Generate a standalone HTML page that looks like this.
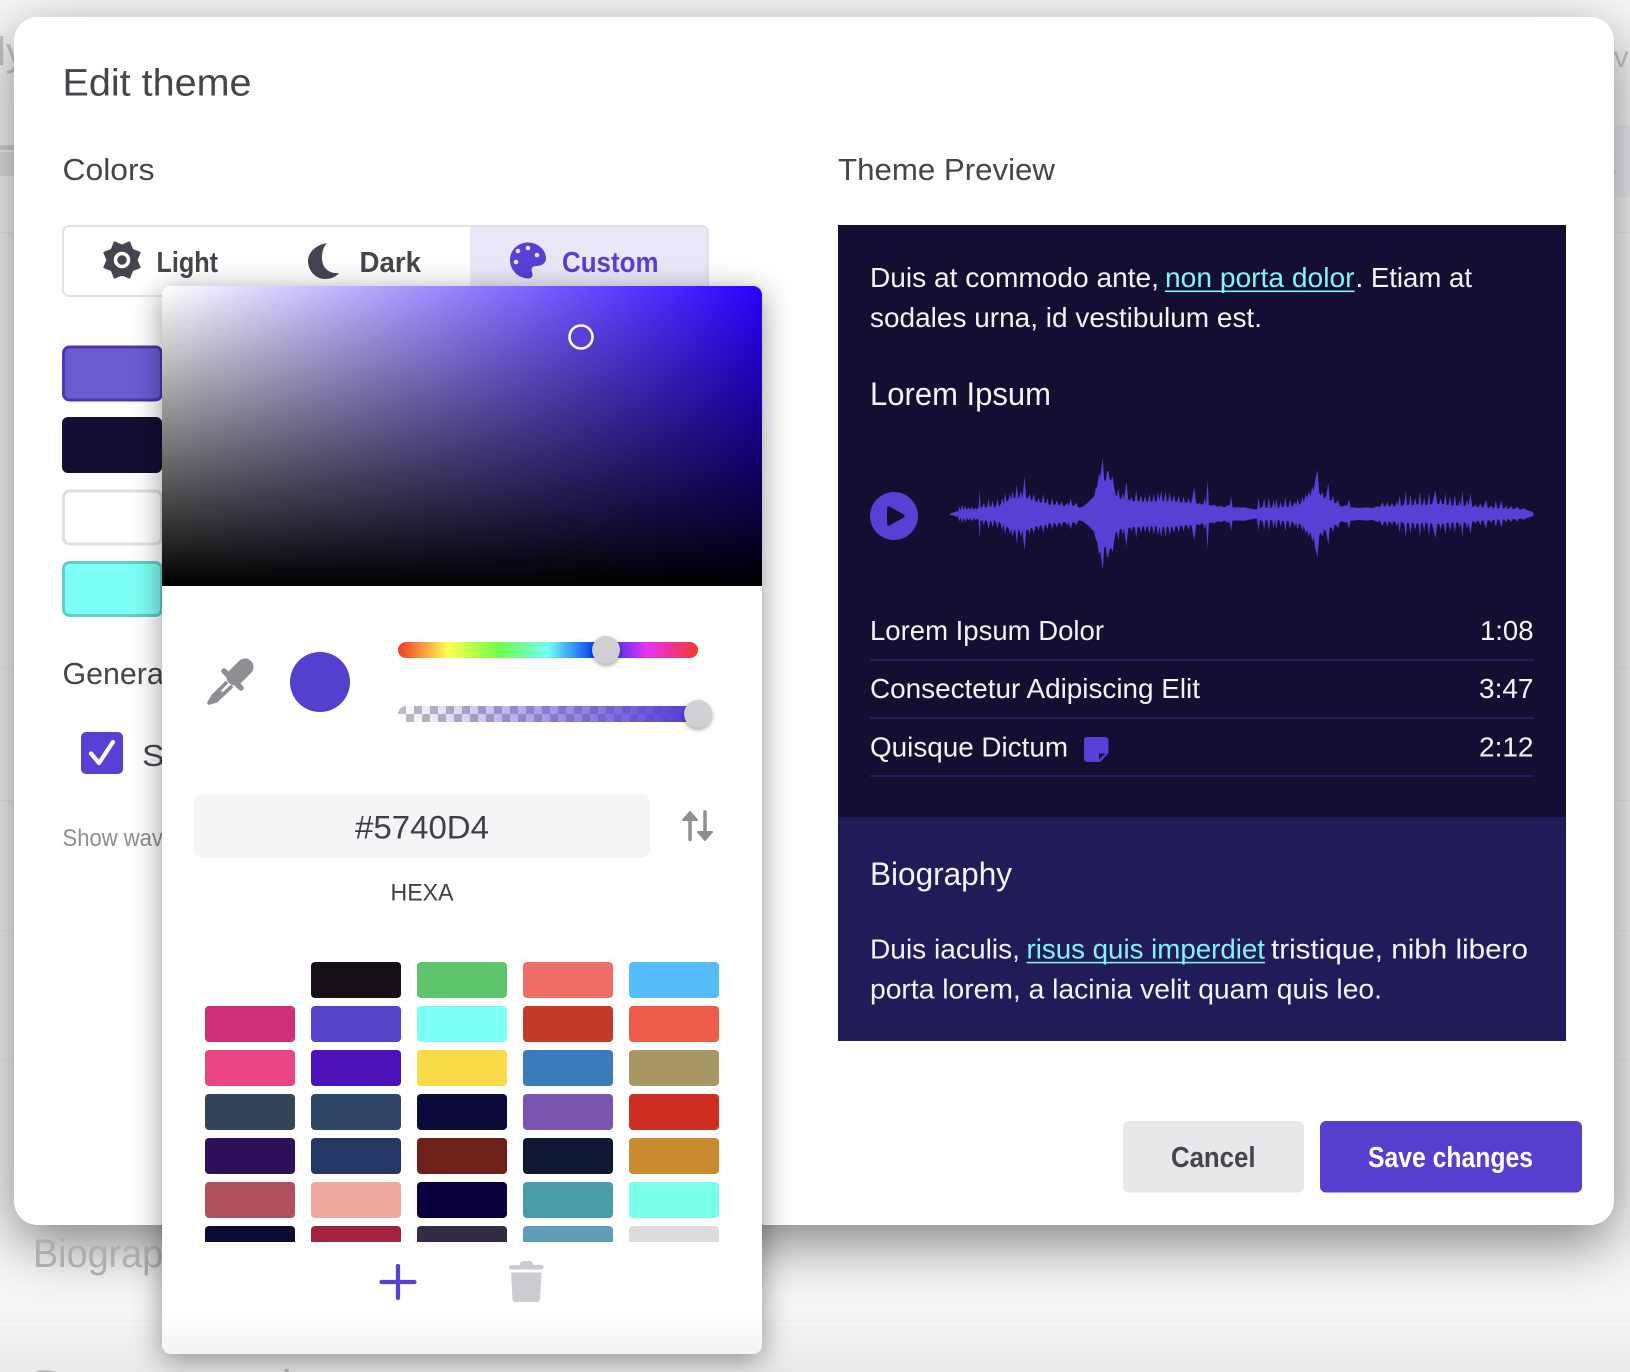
<!DOCTYPE html>
<html><head><meta charset="utf-8"><title>Edit theme</title>
<style>
html,body{margin:0;padding:0;width:1630px;height:1372px;overflow:hidden;background:#f7f7f7}
*{box-sizing:border-box}
.a{position:absolute}
svg{position:absolute;left:0;top:0;overflow:visible}
text{font-family:"Liberation Sans",sans-serif}
#modal{left:14px;top:17px;width:1600px;height:1208px;background:#fff;border-radius:24px;box-shadow:0 18px 58px rgba(0,0,0,.48)}
#pop{left:162px;top:286px;width:600px;height:1068px;background:linear-gradient(to bottom,#fff 0,#fff 1025px,#f4f4f4 1068px);border-radius:9px;box-shadow:0 6px 30px rgba(0,0,0,.42)}
#sat{left:0;top:0;width:600px;height:300px;border-radius:9px 9px 0 0;background:linear-gradient(to top,#000,rgba(0,0,0,0)),linear-gradient(to right,#fff,#2b00ff)}
#hue{left:236px;top:356px;width:300px;height:16px;border-radius:8px;background:linear-gradient(to right,#f03a2a 0,#ffff50 16.6%,#70ff45 33.3%,#70fff5 50%,#0030f0 66.6%,#ea33f0 83.3%,#f03a2a 100%)}
#alpha{left:236px;top:420px;width:300px;height:16px;border-radius:8px 0 0 8px;background:linear-gradient(to right,rgba(87,64,212,0),#5740d4 96%),repeating-conic-gradient(#bdbdbd 0 25%,#fff 0 50%) 8px 0/16px 16px}
.th{width:28px;height:28px;border-radius:50%;background:#cfcfd4;box-shadow:0 2px 5px rgba(0,0,0,.35)}
#inp{left:32px;top:508px;width:456px;height:64px;border-radius:8px;background:#f5f5f8}
#clip{left:43px;top:676px;width:514px;height:280px;overflow:hidden}
#clip div{position:absolute;width:90px;height:36px;border-radius:4px}
</style></head>
<body>

<svg width="1630" height="1372">
  <defs><linearGradient id="bot" x1="0" y1="0" x2="0" y2="1"><stop offset="0" stop-color="#f7f7f7"/><stop offset="1" stop-color="#e9e9e9"/></linearGradient></defs>
  <rect x="0" y="1310" width="1630" height="62" fill="url(#bot)"/>
  <rect x="0" y="145" width="20" height="5" fill="#d6d6d6"/>
  <rect x="0" y="152" width="20" height="24" fill="#e4e4e4"/>
  <rect x="1600" y="125" width="30" height="72" fill="#eeeef3"/>
  <g fill="#eeeeee">
    <rect x="0" y="232" width="1630" height="1"/>
    <rect x="0" y="668" width="1630" height="1"/>
    <rect x="0" y="800" width="1630" height="1"/>
    <rect x="0" y="930" width="1630" height="1"/>
    <rect x="0" y="1059" width="1630" height="1"/>
    <rect x="0" y="1320" width="1630" height="1"/>
  </g>
  <text x="-3" y="65" font-size="40" fill="#c6c6c6">ly</text>
  <text x="1597" y="67" font-size="30" fill="#c4c4ca">av</text>
  <text x="1608" y="172" font-size="26" fill="#c4c4d2">t</text>
</svg>

<div id="modal" class="a"></div>

<svg width="1630" height="1372">
  <text x="33" y="1267" font-size="40" fill="#adadad" textLength="170" lengthAdjust="spacingAndGlyphs">Biography</text>
  <text x="33" y="1398" font-size="40" fill="#b4b4b4" textLength="310" lengthAdjust="spacingAndGlyphs">Documentation</text>
</svg>
<div class="a" style="left:14px;top:17px;width:1600px;height:1208px;background:#fff;border-radius:24px"></div>

<svg width="1630" height="1372">
  <g fill="#45454f">
    <text x="62.5" y="95.5" font-size="38" textLength="189" lengthAdjust="spacingAndGlyphs">Edit theme</text>
    <text x="62.5" y="180" font-size="31" textLength="92" lengthAdjust="spacingAndGlyphs">Colors</text>
    <text x="838" y="180" font-size="31" textLength="217" lengthAdjust="spacingAndGlyphs">Theme Preview</text>
    <text x="62.5" y="684" font-size="31" textLength="108" lengthAdjust="spacingAndGlyphs">General</text>
    <text x="142" y="766" font-size="31" textLength="240" lengthAdjust="spacingAndGlyphs">Show waveform</text>
  </g>
  <text x="62.5" y="846" font-size="24" fill="#8d8d95" textLength="262" lengthAdjust="spacingAndGlyphs">Show waveform in preview</text>

  <!-- segmented -->
  <rect x="63" y="226" width="645" height="70" rx="6" fill="#fff" stroke="#e2e2e2" stroke-width="2"/>
  <path d="M470 227H702a5 5 0 0 1 5 5V295H470Z" fill="#eae8f8"/>
  <path transform="translate(122,260)" fill-rule="evenodd" fill="#45454f" stroke="#45454f" stroke-width="2" stroke-linejoin="round" d="M7.3-17.6 10.25-10.25 17.6-7.3 14.5 0 17.6 7.3 10.25 10.25 7.3 17.6 0 14.5-7.3 17.6-10.25 10.25-17.6 7.3-14.5 0-17.6-7.3-10.25-10.25-7.3-17.6 0-14.5Z"/>
  <circle cx="122" cy="260" r="6.5" fill="#45454f" stroke="#fff" stroke-width="3.5"/>
  <text x="156.5" y="272" font-size="29" fill="#45454f" font-weight="bold" textLength="61.500" lengthAdjust="spacingAndGlyphs">Light</text>
  <path fill="#45454f" d="M327 243C316 245 308 252 308 261C308 271 316 279 325 279C331 279 336 277 339 273C329 274 322 268 322 258C322 251 324 246 327 243Z"/>
  <text x="359.5" y="272" font-size="29" fill="#45454f" font-weight="bold" textLength="61.500" lengthAdjust="spacingAndGlyphs">Dark</text>
  <path fill="#5740d4" d="M528 242.5C538 242.5 546 250 546 258C546 264 541 266 536 266C532 266 531 269 532 272C533 275 533 278 529 278.5C518 278.5 510 270 510 260C510 250 518 242.5 528 242.5Z"/>
  <g fill="#eae8f8"><circle cx="518" cy="251" r="2.3"/><circle cx="528" cy="248" r="2.3"/><circle cx="537" cy="255" r="2.3"/><circle cx="516" cy="262" r="2.3"/></g>
  <text x="562" y="272" font-size="29" fill="#5740d4" font-weight="bold" textLength="96.5" lengthAdjust="spacingAndGlyphs">Custom</text>

  <!-- colour swatches -->
  <rect x="63.5" y="347" width="98" height="53" rx="6" fill="#6c5cd3" stroke="#4a38ad" stroke-width="3"/>
  <rect x="62" y="417" width="100" height="56" rx="6" fill="#150e33"/>
  <rect x="63.5" y="491" width="98" height="53" rx="6" fill="#fff" stroke="#e0e0e0" stroke-width="3"/>
  <rect x="63.5" y="562.5" width="98" height="53" rx="6" fill="#7efff5" stroke="#5fd0c8" stroke-width="3"/>

  <!-- checkbox -->
  <rect x="81" y="732" width="42" height="42" rx="5" fill="#5740d4"/>
  <path d="M91 753.5 99 763 113 742" fill="none" stroke="#fff" stroke-width="4.2" stroke-linecap="round" stroke-linejoin="round"/>

  <!-- preview -->
  <rect x="838" y="225" width="728" height="592" fill="#150e33"/>
  <rect x="838" y="817" width="728" height="224" fill="#221b59"/>
  <g fill="#f4f4f8" font-size="28">
    <text x="870" y="287" textLength="289" lengthAdjust="spacingAndGlyphs">Duis at commodo ante,</text>
    <text x="1355.5" y="287" textLength="116.5" lengthAdjust="spacingAndGlyphs">. Etiam at</text>
    <text x="870" y="327" textLength="392" lengthAdjust="spacingAndGlyphs">sodales urna, id vestibulum est.</text>
    <text x="870" y="640" textLength="234" lengthAdjust="spacingAndGlyphs">Lorem Ipsum Dolor</text>
    <text x="870" y="698" textLength="330" lengthAdjust="spacingAndGlyphs">Consectetur Adipiscing Elit</text>
    <text x="870" y="756.5" textLength="198" lengthAdjust="spacingAndGlyphs">Quisque Dictum</text>
    <text x="1480" y="640" textLength="53.5" lengthAdjust="spacingAndGlyphs">1:08</text>
    <text x="1479" y="698" textLength="54.5" lengthAdjust="spacingAndGlyphs">3:47</text>
    <text x="1479" y="756.5" textLength="54.5" lengthAdjust="spacingAndGlyphs">2:12</text>
    <text x="870" y="958.5" textLength="150" lengthAdjust="spacingAndGlyphs">Duis iaculis,</text>
    <text x="1271" y="958.5" textLength="257" lengthAdjust="spacingAndGlyphs">tristique, nibh libero</text>
    <text x="870" y="998.5" textLength="512" lengthAdjust="spacingAndGlyphs">porta lorem, a lacinia velit quam quis leo.</text>
  </g>
  <g fill="#f4f4f8" font-size="32">
    <text x="870" y="405" textLength="181" lengthAdjust="spacingAndGlyphs">Lorem Ipsum</text>
    <text x="870" y="885" textLength="142" lengthAdjust="spacingAndGlyphs">Biography</text>
  </g>
  <g fill="#7ff5f5" font-size="28">
    <text x="1165" y="287" textLength="189.5" lengthAdjust="spacingAndGlyphs">non porta dolor</text>
    <text x="1026.5" y="958.5" textLength="238.5" lengthAdjust="spacingAndGlyphs">risus quis imperdiet</text>
    <rect x="1165" y="290.5" width="189.5" height="1.6"/>
    <rect x="1026.5" y="961.8" width="238.5" height="1.6"/>
  </g>
  <g fill="#241c5c">
    <rect x="870" y="659" width="664" height="2"/>
    <rect x="870" y="717" width="664" height="2"/>
    <rect x="870" y="775" width="664" height="2"/>
  </g>
  <path fill="#5740d4" d="M1087 737H1105a3.5 3.5 0 0 1 3.5 3.5V753L1100 762H1087a3 3 0 0 1-3-3V740a3 3 0 0 1 3-3Z"/>
  <path fill="#150e33" d="M1099 759.5V753.5H1105.5Z"/>

  <!-- player -->
  <circle cx="894" cy="516" r="24" fill="#5740d4"/>
  <path d="M889 508.5 902.5 516 889 523.5Z" fill="#150e33" stroke="#150e33" stroke-width="4" stroke-linejoin="round"/>
  <g transform="translate(830,430) scale(.4719,.3333)" fill="#5740d4">
    <path id="w" d="M253 252 258 248 264 247 268 243 271 246 274 230 277 242 280 224 283 240 287 228 290 240 294 232 297 240 301 230 304 240 308 234 312 238 315 232 317 178 319 232 323 232 326 218 329 234 333 230 336 206 339 232 342 228 345 212 348 234 352 226 355 208 358 230 362 222 365 204 368 222 371 190 374 214 378 212 381 192 384 208 387 182 390 206 393 200 396 162 399 205 402 200 405 182 408 204 412 140 416 204 420 205 423 190 426 212 429 208 432 192 435 214 439 216 442 202 445 218 449 216 452 192 455 220 458 218 461 205 464 226 468 222 471 205 474 226 478 222 481 210 484 226 488 224 491 214 494 228 498 228 503 218 506 228 510 206 514 228 518 226 522 218 526 232 532 232 538 228 543 222 548 216 552 210 556 204 560 198 563 176 566 170 570 132 573 140 575 115 578 84 581 150 584 155 587 122 590 125 593 148 596 150 599 138 602 170 605 195 608 198 611 175 614 205 617 208 620 190 623 208 628 155 632 208 636 212 639 200 642 214 646 212 649 180 652 214 656 212 659 195 662 216 665 214 668 196 671 216 674 214 677 192 680 216 683 214 686 190 689 216 692 214 695 186 698 214 702 182 705 214 708 212 711 182 714 216 717 212 720 186 723 214 726 212 729 194 732 216 736 214 739 196 742 218 746 216 749 200 752 218 757 218 760 204 763 220 766 218 772 172 776 220 780 222 784 218 787 224 791 222 794 205 797 224 800 148 803 226 808 226 814 224 820 230 828 228 836 232 843 226 847 228 850 200 853 232 860 232 870 232 880 232 890 236 900 238 905 238 908 202 911 234 914 232 917 230 920 206 923 234 927 232 930 202 933 234 937 232 940 210 943 234 946 205 949 236 952 232 955 215 958 232 962 230 965 200 968 232 972 230 975 206 978 230 982 226 985 214 988 226 991 205 994 224 998 220 1001 200 1004 218 1008 192 1011 204 1015 184 1018 200 1022 170 1025 182 1028 150 1033 120 1037 190 1040 196 1044 186 1047 206 1051 200 1056 160 1059 210 1063 212 1066 196 1069 220 1073 218 1077 210 1080 228 1085 230 1092 226 1096 228 1100 208 1103 232 1110 232 1120 234 1135 232 1150 234 1160 228 1165 232 1171 216 1174 230 1178 228 1181 214 1184 230 1188 228 1191 218 1194 230 1198 228 1201 214 1204 228 1207 196 1210 228 1214 226 1217 220 1220 182 1223 226 1227 224 1230 192 1233 226 1237 224 1240 204 1243 224 1247 222 1250 184 1253 226 1256 224 1259 200 1262 226 1266 224 1269 188 1272 224 1276 222 1283 180 1287 222 1291 222 1294 204 1297 222 1301 222 1304 190 1307 226 1311 224 1314 198 1317 226 1321 226 1324 194 1327 226 1331 226 1334 212 1337 226 1340 182 1343 228 1347 226 1350 208 1353 228 1357 190 1361 230 1365 230 1368 222 1371 232 1375 230 1378 218 1381 232 1385 232 1390 208 1394 234 1398 232 1402 226 1405 236 1408 232 1411 212 1414 236 1418 234 1423 212 1426 236 1430 234 1433 226 1436 238 1440 234 1444 228 1447 238 1452 236 1457 230 1460 238 1466 238 1470 234 1476 240 1482 242 1488 245 1492 252Z"/>
    <use href="#w" transform="matrix(1 0 0 -1 0 504)"/>
  </g>

  <!-- buttons -->
  <rect x="1123" y="1121" width="181" height="71.5" rx="6" fill="#e8e8ea"/>
  <rect x="1320" y="1121" width="262" height="71.5" rx="6" fill="#563fcc"/>
  <text x="1171" y="1167" font-size="29" fill="#45454f" font-weight="bold" textLength="84.5" lengthAdjust="spacingAndGlyphs">Cancel</text>
  <text x="1368" y="1167" font-size="29" fill="#fff" font-weight="bold" textLength="165" lengthAdjust="spacingAndGlyphs">Save changes</text>
</svg>

<!-- popover -->
<div id="pop" class="a">
  <div id="sat" class="a"></div>
  <div id="hue" class="a"></div>
  <div id="alpha" class="a"></div>
  <div class="a" style="left:522px;top:420px;width:14px;height:16px;background:#5740d4"></div>
  <div class="a th" style="left:430px;top:350px"></div>
  <div class="a th" style="left:522px;top:414px"></div>
  <div id="inp" class="a"></div>
  <div id="clip" class="a">
    <div style="left:106px;top:0;background:#181018"></div><div style="left:212px;top:0;background:#5fc46e"></div><div style="left:318px;top:0;background:#f06e6a"></div><div style="left:424px;top:0;background:#56bdfb"></div>
    <div style="left:0;top:44px;background:#cf2f75"></div><div style="left:106px;top:44px;background:#5644c8"></div><div style="left:212px;top:44px;background:#7efff5"></div><div style="left:318px;top:44px;background:#c33a28"></div><div style="left:424px;top:44px;background:#ec5c48"></div>
    <div style="left:0;top:88px;background:#ea4683"></div><div style="left:106px;top:88px;background:#4c11b8"></div><div style="left:212px;top:88px;background:#f9da48"></div><div style="left:318px;top:88px;background:#387bb8"></div><div style="left:424px;top:88px;background:#a89664"></div>
    <div style="left:0;top:132px;background:#334459"></div><div style="left:106px;top:132px;background:#2f4669"></div><div style="left:212px;top:132px;background:#0c0a38"></div><div style="left:318px;top:132px;background:#7a54ae"></div><div style="left:424px;top:132px;background:#cd2e20"></div>
    <div style="left:0;top:176px;background:#2d1057"></div><div style="left:106px;top:176px;background:#233864"></div><div style="left:212px;top:176px;background:#6e2118"></div><div style="left:318px;top:176px;background:#0e1633"></div><div style="left:424px;top:176px;background:#c88b30"></div>
    <div style="left:0;top:220px;background:#b14f61"></div><div style="left:106px;top:220px;background:#f0a89e"></div><div style="left:212px;top:220px;background:#0b003f"></div><div style="left:318px;top:220px;background:#489ca8"></div><div style="left:424px;top:220px;background:#7affea"></div>
    <div style="left:0;top:264px;background:#0a0a32"></div><div style="left:106px;top:264px;background:#a22341"></div><div style="left:212px;top:264px;background:#332a44"></div><div style="left:318px;top:264px;background:#5f9cb5"></div><div style="left:424px;top:264px;background:#dcdcdc"></div>
  </div>
</div>

<svg width="1630" height="1372">
  <circle cx="581" cy="337" r="11.500" fill="#5740d4" stroke="#fff" stroke-width="2.6"/>

  <!-- eyedropper -->
  <g fill="#8e8e93" stroke="#8e8e93">
    <path d="M235 677 245 667" stroke-width="17" stroke-linecap="round"/>
    <path d="M224 671 241 688" stroke-width="5.5" stroke-linecap="round"/>
    <path d="M226 683 213 696 209 703 216 701 231 687" fill="none" stroke-width="3.6" stroke-linejoin="round" stroke-linecap="round"/>
    <path d="M214 696 222 691 217 700 210 703Z" stroke-width="1"/>
  </g>
  <circle cx="320" cy="682" r="30" fill="#5340cc"/>

  <!-- swap -->
  <g fill="#8e8e93" stroke="#8e8e93" stroke-linejoin="round" stroke-linecap="round">
    <path d="M690 816V839.5" stroke-width="3.5"/>
    <path d="M690 812 697 820H683Z" stroke-width="2"/>
    <path d="M705 812V835" stroke-width="3.5"/>
    <path d="M705 840 698 832H712Z" stroke-width="2"/>
  </g>

  <text x="355" y="838.500" font-size="32" fill="#3f3f46" textLength="134" lengthAdjust="spacingAndGlyphs">#5740D4</text>
  <text x="390.500" y="900.5" font-size="24" fill="#3f3f46" textLength="63" lengthAdjust="spacingAndGlyphs">HEXA</text>

  <!-- add -->
  <path d="M398 1266V1298M381.500 1282H414.500" stroke="#5740d4" stroke-width="4.2" stroke-linecap="round" fill="none"/>

  <!-- trash -->
  <g fill="#ccccd0">
    <path d="M519.5 1265C520 1262 522 1261 524 1261H529C531 1261 533 1262 533.5 1265Z"/>
    <rect x="509" y="1265" width="34.5" height="4.5" rx="2.2"/>
    <path d="M511 1272.5H541.5L540 1299C540 1301 538.500 1302 536.500 1302H516C514 1302 512.500 1301 512.500 1299Z"/>
  </g>
</svg>
</body></html>
